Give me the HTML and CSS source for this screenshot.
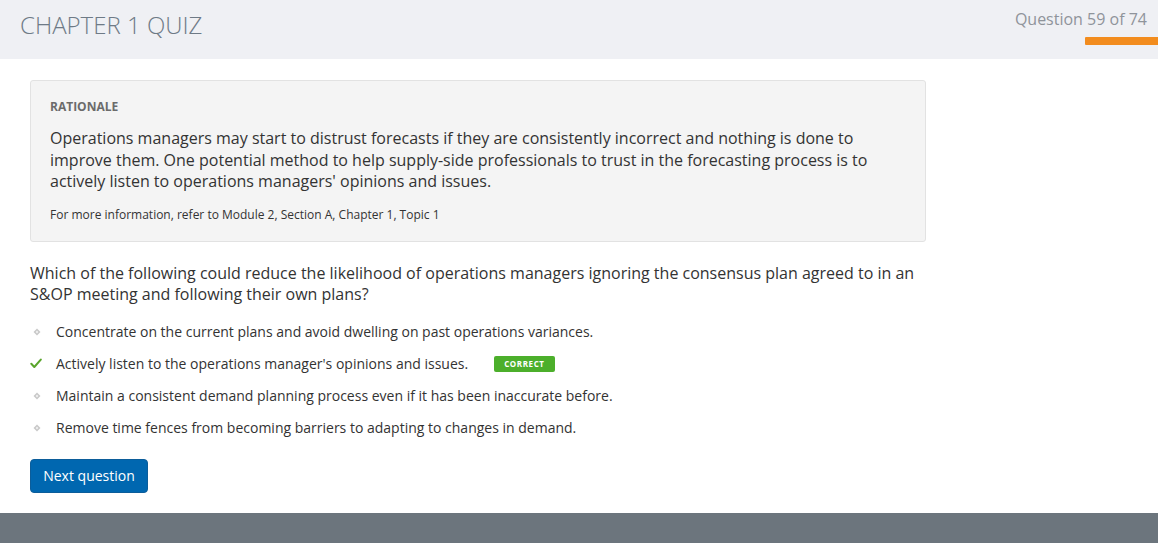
FILE: index.html
```html
<!DOCTYPE html>
<html lang="en">
<head>
<meta charset="utf-8">
<title>Chapter 1 Quiz</title>
<link rel="stylesheet" href="styles.css">
</head>
<body>
<header class="topbar">
  <h1 class="title">CHAPTER 1 QUIZ</h1>
  <div class="progress">
    <div class="progress-text">Question 59 of 74</div>
    <div class="progress-bar"></div>
  </div>
</header>
<main class="content">
  <section class="rationale">
    <h2 class="rationale-label">RATIONALE</h2>
    <p class="rationale-text">Operations managers may start to distrust forecasts if they are consistently incorrect and nothing is done to improve them. One potential method to help supply-side professionals to trust in the forecasting process is to actively listen to operations managers' opinions and issues.</p>
    <p class="rationale-ref">For more information, refer to Module 2, Section A, Chapter 1, Topic 1</p>
  </section>
  <p class="question">Which of the following could reduce the likelihood of operations managers ignoring the consensus plan agreed to in an S&amp;OP meeting and following their own plans?</p>
  <ul class="options">
    <li class="option">
      <span class="marker"><svg width="8" height="8" viewBox="0 0 8 8"><path d="M4 0.5 L7.5 4 L4 7.5 L0.5 4 Z" fill="#c9c9c9"/><circle cx="4" cy="4" r="1.2" fill="#ececec"/></svg></span>
      <span>Concentrate on the current plans and avoid dwelling on past operations variances.</span>
    </li>
    <li class="option">
      <span class="marker check"><svg width="12" height="11" viewBox="0 0 12 11"><path d="M1.3 5.8 L4.3 9 L10.8 1.6" fill="none" stroke="#5aa52c" stroke-width="2" stroke-linecap="round" stroke-linejoin="round"/></svg></span>
      <span>Actively listen to the operations manager's opinions and issues.</span>
      <span class="badge">CORRECT</span>
    </li>
    <li class="option">
      <span class="marker"><svg width="8" height="8" viewBox="0 0 8 8"><path d="M4 0.5 L7.5 4 L4 7.5 L0.5 4 Z" fill="#c9c9c9"/><circle cx="4" cy="4" r="1.2" fill="#ececec"/></svg></span>
      <span>Maintain a consistent demand planning process even if it has been inaccurate before.</span>
    </li>
    <li class="option">
      <span class="marker"><svg width="8" height="8" viewBox="0 0 8 8"><path d="M4 0.5 L7.5 4 L4 7.5 L0.5 4 Z" fill="#c9c9c9"/><circle cx="4" cy="4" r="1.2" fill="#ececec"/></svg></span>
      <span>Remove time fences from becoming barriers to adapting to changes in demand.</span>
    </li>
  </ul>
  <button class="next-btn" type="button">Next question</button>
</main>
<footer class="footer"></footer>
</body>
</html>
```

FILE: styles.css
```css
* { box-sizing: border-box; }
html, body { margin: 0; padding: 0; }
body {
  font-family: "Open Sans", "Noto Sans", sans-serif;
  color: #333;
  background: #fff;
  width: 1158px;
  height: 543px;
  overflow: hidden;
  display: flex;
  flex-direction: column;
}
.topbar {
  height: 59px;
  background: #eff0f4;
  display: flex;
  justify-content: space-between;
  align-items: flex-start;
  flex-shrink: 0;
}
.title {
  margin: 9px 0 0 20px;
  font-size: 24px;
  font-weight: 300;
  color: #6e7a86;
  line-height: 32px;
}
.progress {
  display: flex;
  flex-direction: column;
  align-items: flex-end;
  padding-top: 8px;
}
.progress-text {
  font-size: 16px;
  color: #8f949b;
  line-height: 22px;
  margin-right: 11px;
}
.progress-bar {
  width: 73px;
  height: 8px;
  background: #f28c1e;
  margin-top: 7px;
  border-radius: 1px 0 0 1px;
}
.content {
  padding: 21px 0 0 30px;
  flex: 1;
}
.rationale {
  width: 896px;
  background: #f4f4f4;
  border: 1px solid #e2e2e2;
  border-radius: 3px;
  padding: 17px 19px 17px 19px;
}
.rationale-label {
  margin: 0;
  font-size: 12px;
  font-weight: 700;
  color: #6b6b6b;
  line-height: 18px;
}
.rationale-text {
  margin: 12px 0 0;
  font-size: 16px;
  line-height: 21.5px;
  color: #333;
}
.rationale-ref {
  margin: 13px 0 0;
  font-size: 12px;
  line-height: 18px;
  color: #333;
}
.question {
  margin: 21px 0 0;
  width: 900px;
  font-size: 16px;
  line-height: 21.5px;
  color: #333;
}
.options {
  list-style: none;
  margin: 16px 0 0;
  padding: 0;
}
.option {
  display: flex;
  align-items: center;
  height: 20px;
  margin-bottom: 12px;
  font-size: 14px;
  line-height: 20px;
  color: #333;
}
.marker {
  width: 26px;
  display: flex;
  align-items: center;
  padding-left: 3px;
}
.marker.check { padding-left: 0; }
.option .marker svg { display: block; }
.badge {
  margin-left: 26px;
  background: #4caf2b;
  color: #fff;
  font-size: 8px;
  font-weight: 700;
  letter-spacing: 0.6px;
  line-height: 16px;
  height: 16px;
  padding: 0 10px;
  border-radius: 2px;
}
.next-btn {
  margin-top: 9px;
  width: 118px;
  height: 34px;
  background: #0067b0;
  border: 1px solid #0c5d9a;
  border-radius: 4px;
  color: #fff;
  font-family: "Open Sans", "Noto Sans", sans-serif;
  font-size: 14px;
  padding: 0;
  cursor: pointer;
}
.footer {
  height: 30px;
  background: #6c757d;
  flex-shrink: 0;
}
```
